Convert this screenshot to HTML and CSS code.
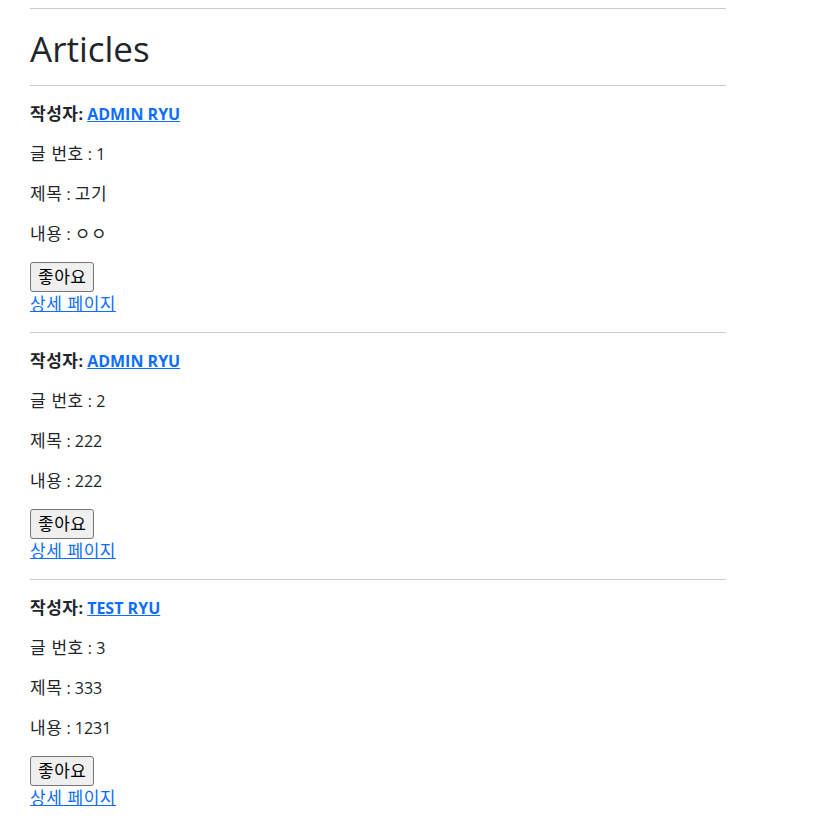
FILE: index.html
```html
<!DOCTYPE html>
<html lang="ko">
<head>
<meta charset="utf-8">
<title>Articles</title>
<link rel="stylesheet" href="styles.css">
</head>
<body>
<div class="container">
  <hr class="rule rule-top">
  <h1 class="title">Articles</h1>
  <hr class="rule rule-title">

  <div class="article">
    <p class="line"><b><span class="ko">작성자</span>: <a class="link" href="#">ADMIN RYU</a></b></p>
    <p class="line"><span class="ko">글 번호</span> : 1</p>
    <p class="line"><span class="ko">제목</span> : <span class="ko">고기</span></p>
    <p class="line"><span class="ko">내용</span> : <span class="ko">ㅇㅇ</span></p>
    <form class="like-form"><button class="like-btn" type="button"><span class="ko">좋아요</span></button></form>
    <a class="link" href="#"><span class="ko">상세 페이지</span></a>
  </div>
  <hr class="rule">

  <div class="article">
    <p class="line"><b><span class="ko">작성자</span>: <a class="link" href="#">ADMIN RYU</a></b></p>
    <p class="line"><span class="ko">글 번호</span> : 2</p>
    <p class="line"><span class="ko">제목</span> : 222</p>
    <p class="line"><span class="ko">내용</span> : 222</p>
    <form class="like-form"><button class="like-btn" type="button"><span class="ko">좋아요</span></button></form>
    <a class="link" href="#"><span class="ko">상세 페이지</span></a>
  </div>
  <hr class="rule">

  <div class="article">
    <p class="line"><b><span class="ko">작성자</span>: <a class="link" href="#">TEST RYU</a></b></p>
    <p class="line"><span class="ko">글 번호</span> : 3</p>
    <p class="line"><span class="ko">제목</span> : 333</p>
    <p class="line"><span class="ko">내용</span> : 1231</p>
    <form class="like-form"><button class="like-btn" type="button"><span class="ko">좋아요</span></button></form>
    <a class="link" href="#"><span class="ko">상세 페이지</span></a>
  </div>
  <hr class="rule">
</div>
</body>
</html>
```

FILE: styles.css
```css
html, body {
  margin: 0;
  padding: 0;
  background: #fff;
}
body {
  font-family: "Open Sans", "Noto Sans CJK KR", sans-serif;
  font-size: 16px;
  line-height: 24px;
  color: #212529;
}
.container {
  width: 696px;
  margin-left: 30px;
}
.ko {
  font-family: "Noto Sans CJK KR", sans-serif;
  font-size: 17px;
  line-height: 16px;
  letter-spacing: 0.5px;
}
.rule {
  border: 0;
  border-top: 1px solid #c8c9ca;
  margin: 16px 0;
  height: 0;
}
.rule-top {
  margin: 8px 0 15px;
}
.rule-title {
  margin-top: 13px;
}
.title {
  font-family: "Open Sans", sans-serif;
  font-size: 35px;
  font-weight: 400;
  line-height: 47px;
  padding-top: 1px;
  margin: 0;
}
.line {
  margin: 0 0 16px;
  height: 24px;
}
.link {
  color: #0d6efd;
  text-decoration: underline;
}
.like-form {
  margin: 0;
}
.like-btn {
  font-family: inherit;
  font-size: 16px;
  line-height: 24px;
  height: 30px;
  color: #000;
  background: #efefef;
  border: 1px solid #767676;
  border-radius: 3px;
  padding: 2px 7px;
  margin: 0;
  display: block;
}
```
